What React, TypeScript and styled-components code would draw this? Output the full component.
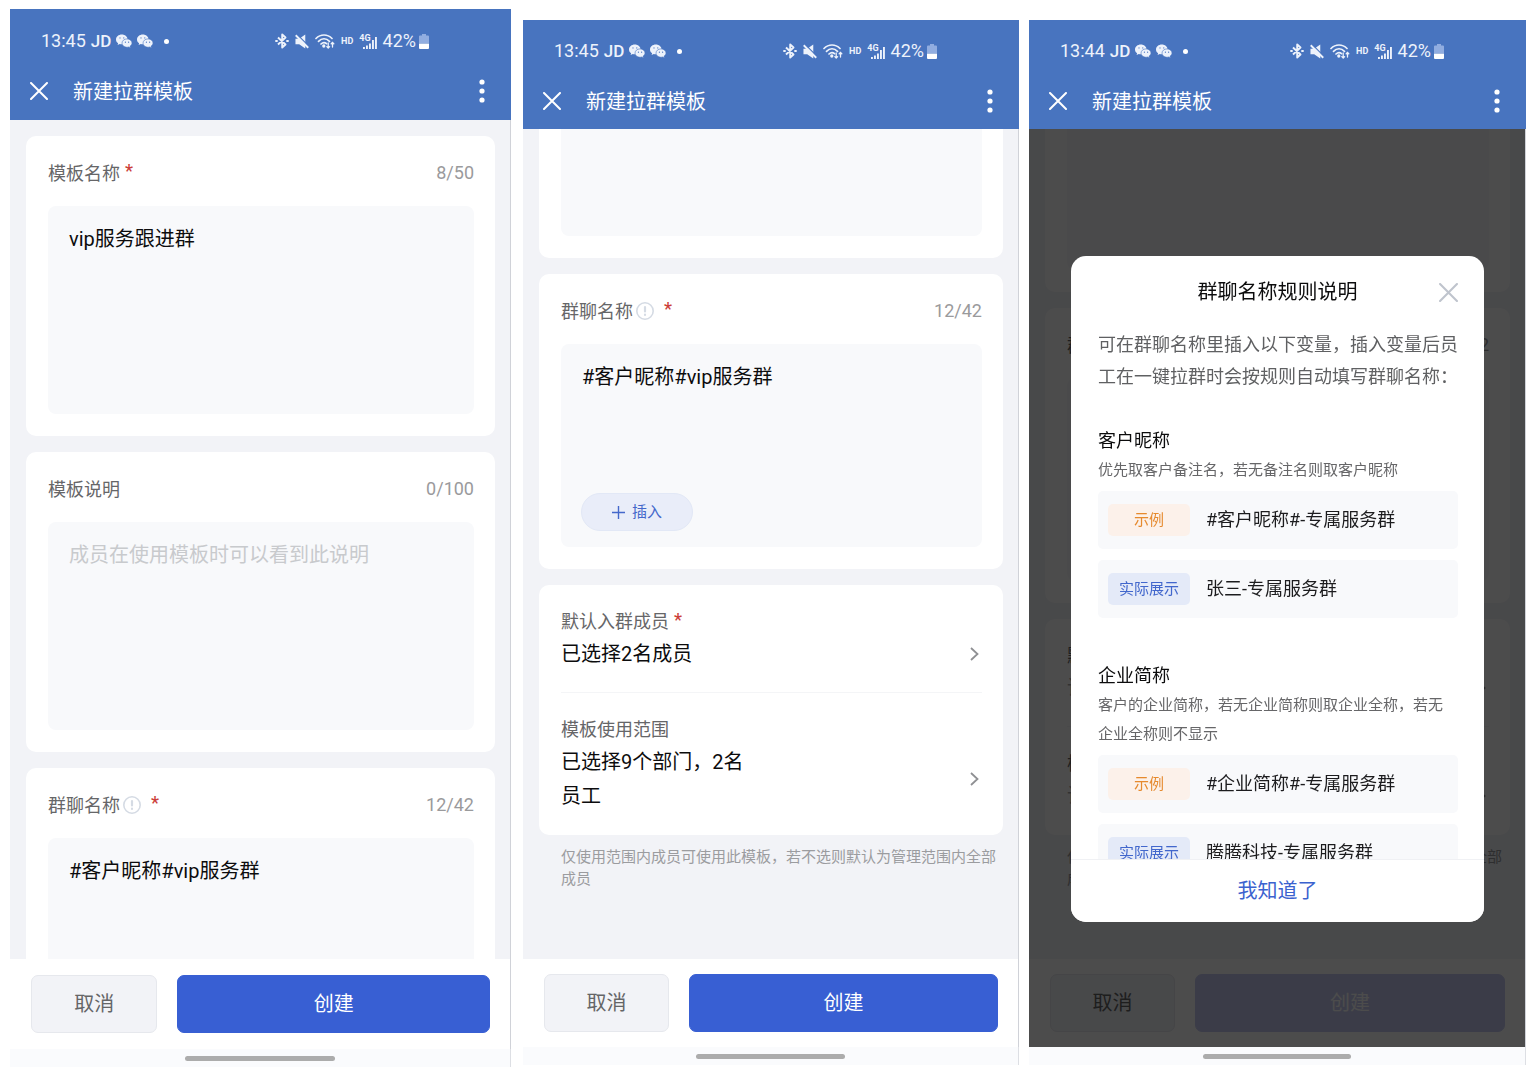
import React, { useId, useLayoutEffect, useRef } from "react";
import styled, { createGlobalStyle } from "styled-components";

const GlobalStyle = createGlobalStyle`
  * { box-sizing: border-box; }
  body {
    margin: 0;
    background: #ffffff;
    font-family: Roboto, "Noto Sans CJK SC", sans-serif;
    color: #0c0c0d;
  }
  button, textarea { font-family: inherit; }
  h1, h2, h3, p { margin: 0; font-weight: 400; }
`;

/* ---------- page ---------- */

const Gallery = styled.main`
  display: grid;
  grid-template-columns: minmax(0, 503fr) minmax(0, 496fr) minmax(0, 497fr);
  gap: 10px;
  height: 100vh;
  padding: 0 10px;
`;

const Slot = styled.div<{ $large?: boolean }>`
  display: flex;
  min-height: 0;
  padding: ${(p) => (p.$large ? "9px 2px 1px 0" : "20px 0 3px")};
`;

const Phone = styled.section`
  flex: 1;
  min-width: 0;
  display: flex;
  flex-direction: column;
`;

/* ---------- header ---------- */

const Header = styled.header<{ $large?: boolean }>`
  padding: ${(p) => (p.$large ? "20px 0 3px" : "19px 0 2px")};
  background: #4874bf;
  color: #ffffff;
`;

const StatusBar = styled.div`
  display: flex;
  align-items: center;
  justify-content: space-between;
  height: 24px;
  padding: 0 82px 0 31px;
  font-size: 18px;
  line-height: 24px;
  color: #edf2fb;
`;

const StatusGroup = styled.div<{ $gap: number }>`
  display: flex;
  align-items: center;
  gap: ${(p) => p.$gap}px;
`;

const JdMark = styled.span`
  font-size: 17px;
  font-weight: 500;
`;

const HdMark = styled.span`
  font-size: 9px;
  font-weight: 700;
`;

const Signal = styled.span`
  display: flex;
  align-items: flex-end;
  height: 15px;
`;

const SignalLabel = styled.span`
  align-self: flex-start;
  margin-right: -8px;
  font-size: 9px;
  font-weight: 700;
  line-height: 8px;
`;

const Dot = styled.span`
  width: 5px;
  height: 5px;
  margin-left: 6px;
  border-radius: 50%;
  background: #ffffff;
`;

const TitleRow = styled.div`
  display: flex;
  align-items: center;
  height: 52px;
  margin-top: 12px;
  padding: 0 17px;
`;

const IconButton = styled.button`
  display: grid;
  place-items: center;
  width: 24px;
  height: 32px;
  padding: 0;
  border: 0;
  background: none;
  color: inherit;
  cursor: pointer;
`;

const Title = styled.h1`
  flex: 1;
  padding: 2px 0 0 22px;
  font-size: 20px;
  line-height: 28px;
`;

/* ---------- content ---------- */

const Screen = styled.div`
  position: relative;
  flex: 1;
  min-height: 0;
  display: flex;
  flex-direction: column;
  border-right: 1px solid #d0d2d8;
`;

const Scroller = styled.div`
  flex: 1;
  min-height: 0;
  overflow-y: auto;
  scrollbar-width: none;
  background: #f2f3f7;
`;

const FormStack = styled.form`
  display: flex;
  flex-direction: column;
  gap: 16px;
  padding: 16px 15px 0 16px;
`;

const Card = styled.div`
  padding: 22px 21px 22px 22px;
  border-radius: 10px;
  background: #ffffff;
`;

const FieldHead = styled.div`
  display: flex;
  align-items: center;
  height: 30px;
  margin-bottom: 18px;
  font-size: 18px;
  line-height: 30px;
`;

const FieldLabel = styled.label`
  padding-top: 2px;
  color: #666668;
`;

const InfoButton = styled(IconButton)`
  width: 18px;
  height: 18px;
  margin: 0 5px 0 3px;
  color: #d5dbe4;
`;

const Star = styled.span`
  margin-left: 5px;
  padding-bottom: 4px;
  font-weight: 500;
  line-height: 26px;
  color: #cc3f3a;
`;

const Counter = styled.span`
  margin-left: auto;
  color: #9a9a9c;
`;

const FieldBox = styled.div<{ $large?: boolean }>`
  display: flex;
  flex-direction: column;
  align-items: flex-start;
  height: ${(p) => (p.$large ? 208 : 203)}px;
  border-radius: 8px;
  background: #f8f9fb;
`;

const TextArea = styled.textarea`
  flex: 1;
  width: 100%;
  padding: 19px 21px;
  border: 0;
  outline: 0;
  resize: none;
  background: none;
  font-size: 20px;
  line-height: 28px;
  color: #0c0c0d;
  &::placeholder { color: #c8cacd; opacity: 1; }
`;

const InsertButton = styled.button`
  display: flex;
  align-items: center;
  gap: 7px;
  height: 38px;
  margin: 0 20px 16px;
  padding: 0 30px;
  border: 1px solid #e2e8f6;
  border-radius: 19px;
  background: #e9edf9;
  font-size: 15px;
  line-height: 22px;
  color: #4468cb;
  cursor: pointer;
`;

const RowCard = styled(Card)`
  padding-top: 0;
  padding-bottom: 0;
`;

const PickerRow = styled.button`
  display: block;
  width: 100%;
  padding: 22px 0 21px;
  border: 0;
  border-bottom: 1px solid #f4f5f7;
  background: none;
  text-align: left;
  cursor: pointer;
  &:last-child { border-bottom-color: transparent; }
`;

const PickerLabel = styled.span`
  display: flex;
  font-size: 18px;
  line-height: 30px;
  color: #666668;
`;

const PickerBody = styled.span`
  display: flex;
  align-items: center;
  justify-content: space-between;
`;

const PickerValue = styled.span<{ $empty?: boolean }>`
  max-width: 45%;
  font-size: 20px;
  line-height: 34px;
  color: ${(p) => (p.$empty ? "#a8a9ab" : "#0c0c0d")};
`;

const Hint = styled.p`
  padding: 11px 15px 69px 38px;
  font-size: 15px;
  line-height: 22px;
  color: #9b9c9f;
`;

/* ---------- footer ---------- */

const Footer = styled.footer<{ $large?: boolean }>`
  display: flex;
  gap: 20px;
  padding: ${(p) => (p.$large ? 16 : 15)}px 20px ${(p) => (p.$large ? 16 : 15)}px 21px;
  background: #ffffff;
`;

const ActionButton = styled.button<{ $kind: "cancel" | "create" | "muted" }>`
  flex: ${(p) => (p.$kind === "cancel" ? 2 : 5)} 1 0;
  min-width: 0;
  height: 58px;
  padding: 0;
  border: 1px solid ${(p) => ({ cancel: "#e6e8ed", create: "#385fd3", muted: "#c6caf0" })[p.$kind]};
  border-radius: 7px;
  background: ${(p) => ({ cancel: "#f2f3f7", create: "#385fd3", muted: "#c6caf0" })[p.$kind]};
  font-size: 20px;
  line-height: 28px;
  color: ${(p) => (p.$kind === "cancel" ? "#646567" : "#ffffff")};
  cursor: pointer;
`;

const NavBar = styled.div`
  display: flex;
  justify-content: center;
  height: 18px;
  padding-top: 7px;
  border-right: 1px solid #dddfe4;
  background: #fafbfd;
`;

const HomePill = styled.span`
  width: 30%;
  height: 5px;
  border-radius: 3px;
  background: #acacac;
`;

/* ---------- dialog ---------- */

const Overlay = styled.div`
  position: absolute;
  inset: 0;
  display: flex;
  align-items: center;
  padding: 127px 41px 125px 42px;
  background: rgba(0, 0, 0, 0.7);
`;

const Dialog = styled.div`
  display: flex;
  flex-direction: column;
  width: 100%;
  max-height: 100%;
  border-radius: 15px;
  background: #ffffff;
  overflow: hidden;
`;

const DialogHead = styled.div`
  display: grid;
  grid-template-columns: 24px 1fr 24px;
  align-items: center;
  flex: none;
  height: 72px;
  padding: 0 24px;
  color: #bfc4cd;
`;

const DialogTitle = styled.h2`
  grid-column: 2;
  text-align: center;
  font-size: 20px;
  line-height: 28px;
  color: #0c0c0d;
`;

const DialogBody = styled.div`
  flex: 1;
  min-height: 0;
  overflow-y: auto;
  scrollbar-width: none;
  padding: 1px 26px 0 27px;
`;

const Intro = styled.p`
  margin-bottom: 33px;
  font-size: 18px;
  line-height: 32px;
  color: #5f6062;
`;

const Rule = styled.section`
  margin-bottom: 43px;
`;

const RuleTitle = styled.h3`
  font-size: 18px;
  line-height: 30px;
`;

const RuleText = styled.p`
  margin-bottom: 6px;
  padding-right: 10px;
  font-size: 15px;
  line-height: 29px;
  color: #666668;
`;

const Sample = styled.div`
  display: flex;
  align-items: center;
  gap: 16px;
  height: 58px;
  margin-bottom: 11px;
  padding: 0 10px;
  border-radius: 5px;
  background: #f8f9fb;
  font-size: 18px;
  line-height: 28px;
  color: #1c1c1e;
`;

const Tag = styled.span<{ $tone: "orange" | "blue" }>`
  flex: none;
  min-width: 82px;
  padding: 0 11px;
  border-radius: 5px;
  text-align: center;
  font-size: 15px;
  line-height: 32px;
  background: ${(p) => (p.$tone === "orange" ? "#fcf1ea" : "#e4eaf8")};
  color: ${(p) => (p.$tone === "orange" ? "#e68a2e" : "#4267cc")};
`;

const ConfirmButton = styled.button`
  flex: none;
  height: 63px;
  border: 0;
  border-top: 1px solid #f0f1f4;
  background: #ffffff;
  font-size: 20px;
  line-height: 28px;
  color: #3b62cf;
  cursor: pointer;
`;

/* ---------- icons ---------- */

const Cross = ({ size, weight }: { size: number; weight: number }) => (
  <svg width={size} height={size} viewBox="0 0 18 18" fill="none" stroke="currentColor" strokeWidth={weight} strokeLinecap="round">
    <path d="M1 1l16 16M17 1L1 17" />
  </svg>
);

const MoreDots = () => (
  <svg width="6" height="24" viewBox="0 0 6 24" fill="currentColor">
    <circle cx="3" cy="3" r="2.6" />
    <circle cx="3" cy="12" r="2.6" />
    <circle cx="3" cy="21" r="2.6" />
  </svg>
);

const WeChat = () => (
  <svg width="16" height="14" viewBox="0 0 16 14">
    <path fill="currentColor" d="M5.800 0.500C2.600 0.500 0 2.700 0 5.500c0 1.600.8 2.900 2.100 3.800L1.600 11l2.200-1c.6.2 1.300.3 2 .3 3.200 0 5.800-2.200 5.800-4.900S9 .5 5.800.5z" />
    <path fill="currentColor" stroke="#4874bf" strokeWidth=".6" d="M11 4.900c-2.800 0-5 1.900-5 4.200s2.200 4.200 5 4.200c.6 0 1.200-.1 1.700-.3l1.800.9-.5-1.600c1.200-.7 2-1.900 2-3.200 0-2.300-2.200-4.200-5-4.200z" />
    <circle cx="4" cy="3.900" r=".6" fill="#4874bf" />
    <circle cx="7.800" cy="3.900" r=".6" fill="#4874bf" />
    <circle cx="9.400" cy="8.200" r=".6" fill="#4874bf" />
    <circle cx="12.600" cy="8.200" r=".6" fill="#4874bf" />
  </svg>
);

const Bluetooth = () => (
  <svg width="14" height="16" viewBox="0 0 14 16" fill="none" stroke="currentColor" strokeWidth="1.900" strokeLinejoin="round">
    <path d="M3 4.500l7.500 7L7.200 14.500V1.500l3.300 3L3 11.500" />
    <path d="M0.300 8h2.400M11.300 8h2.400" strokeWidth="2.200" />
  </svg>
);

const Muted = () => (
  <svg width="14" height="15" viewBox="0 0 15 15" fill="none" stroke="currentColor">
    <path fill="currentColor" stroke="none" d="M0.500 4.500v6h4l6.500 4.500V0L4.500 4.500z" />
    <path d="M2.200 0l13 13" stroke="#4874bf" strokeWidth="1.300" />
    <path d="M.8 .8l13.400 13.400" strokeWidth="2" />
  </svg>
);

const Wifi = () => (
  <svg width="20" height="16" viewBox="0 0 20 16" fill="none" stroke="currentColor" strokeWidth="1.700" strokeLinecap="round">
    <path d="M1 5.500c4.600-4.700 11.400-4.700 16 0" />
    <path d="M3.500 8.300c3.300-3.200 7.700-3.200 11 0" />
    <path d="M6 11c1.800-1.700 4-1.700 5.500-.3" />
    <circle cx="8.800" cy="13" r=".8" fill="currentColor" />
    <path d="M13.200 10v5M11.800 13.600l1.400 1.400 1.400-1.400M17.500 14V9.500M16.200 10.800l1.300-1.300 1.300 1.300" strokeWidth="1.300" />
  </svg>
);

const Bars = () => (
  <svg width="14" height="13" viewBox="0 0 14 13" fill="currentColor">
    <path d="M0 11h1.900v2H0zM3 9.500h1.900V13H3zM6 7.500h1.900V13H6zM9 4h1.900v9H9zM12 1h1.900v12H12z" />
  </svg>
);

const Battery = () => (
  <svg width="10" height="15" viewBox="0 0 10 15">
    <path fill="#91ade0" d="M3 0h4v1.500h2a1 1 0 011 1V9H0V2.500a1 1 0 011-1h2z" />
    <path fill="#ffffff" d="M0 9.500h10V14a1 1 0 01-1 1H1a1 1 0 01-1-1z" />
  </svg>
);

const Info = () => (
  <svg width="18" height="18" viewBox="0 0 18 18" fill="none" stroke="currentColor" strokeLinecap="round">
    <circle cx="9" cy="9" r="8.200" strokeWidth="1.600" />
    <path d="M9 5.200v4.300M9 12.700v.2" strokeWidth="2.200" />
  </svg>
);

const Plus = () => (
  <svg width="13" height="13" viewBox="0 0 13 13" stroke="currentColor" strokeWidth="1.400">
    <path d="M6.500 0v13M0 6.500h13" />
  </svg>
);

const Chevron = () => (
  <svg width="16" height="14" viewBox="0 0 16 14" fill="none" stroke="#8f9093" strokeWidth="1.800">
    <path d="M5 1l6.500 6L5 13" />
  </svg>
);

/* ---------- parts ---------- */

interface AppBarProps {
  time: string;
  large?: boolean;
}

function AppBar({ time, large }: AppBarProps) {
  return (
    <Header $large={large}>
      <StatusBar>
        <StatusGroup $gap={5}>
          <span>{time}</span>
          <JdMark>JD</JdMark>
          <WeChat />
          <WeChat />
          <Dot />
        </StatusGroup>
        <StatusGroup $gap={6}>
          <Bluetooth />
          <Muted />
          <Wifi />
          <HdMark>HD</HdMark>
          <Signal>
            <SignalLabel>4G</SignalLabel>
            <Bars />
          </Signal>
          <StatusGroup $gap={3}>
            <span>42%</span>
            <Battery />
          </StatusGroup>
        </StatusGroup>
      </StatusBar>
      <TitleRow>
        <IconButton aria-label="关闭"><Cross size={18} weight={2} /></IconButton>
        <Title>新建拉群模板</Title>
        <IconButton aria-label="更多"><MoreDots /></IconButton>
      </TitleRow>
    </Header>
  );
}

interface FieldProps {
  label: string;
  count: string;
  value?: string;
  placeholder?: string;
  required?: boolean;
  info?: boolean;
  insert?: boolean;
  large?: boolean;
}

function Field({ label, count, value, placeholder, required, info, insert, large }: FieldProps) {
  const id = useId();
  return (
    <Card>
      <FieldHead>
        <FieldLabel htmlFor={id}>{label}</FieldLabel>
        {info && <InfoButton type="button" aria-label="规则说明"><Info /></InfoButton>}
        {required && <Star>*</Star>}
        <Counter>{count}</Counter>
      </FieldHead>
      <FieldBox $large={large}>
        <TextArea id={id} defaultValue={value} placeholder={placeholder} spellCheck={false} />
        {insert && <InsertButton type="button"><Plus />插入</InsertButton>}
      </FieldBox>
    </Card>
  );
}

interface PickerProps {
  label: string;
  value: string;
  required?: boolean;
  empty?: boolean;
}

function Picker({ label, value, required, empty }: PickerProps) {
  return (
    <PickerRow type="button">
      <PickerLabel>{label}{required && <Star>*</Star>}</PickerLabel>
      <PickerBody>
        <PickerValue $empty={empty}>{value}</PickerValue>
        <Chevron />
      </PickerBody>
    </PickerRow>
  );
}

function Actions({ large, muted }: { large?: boolean; muted?: boolean }) {
  return (
    <Footer $large={large}>
      <ActionButton type="button" $kind="cancel">取消</ActionButton>
      <ActionButton type="button" $kind={muted ? "muted" : "create"}>创建</ActionButton>
    </Footer>
  );
}

function HomeIndicator() {
  return <NavBar><HomePill /></NavBar>;
}

interface LowerFormProps {
  chatName?: string;
  count: string;
  members: string;
  scope: string;
  empty?: boolean;
}

/* The form scrolled down to its last card. */
function LowerForm({ chatName, count, members, scope, empty }: LowerFormProps) {
  const scroller = useRef<HTMLDivElement>(null);
  useLayoutEffect(() => {
    const el = scroller.current;
    if (el) el.scrollTop = el.scrollHeight;
  }, []);
  return (
    <Scroller ref={scroller}>
      <FormStack>
        <Field label="模板说明" count="0/100" />
        <Field label="群聊名称" count={count} value={chatName} required info insert />
        <RowCard>
          <Picker label="默认入群成员" value={members} required empty={empty} />
          <Picker label="模板使用范围" value={scope} empty={empty} />
        </RowCard>
      </FormStack>
      <Hint>仅使用范围内成员可使用此模板，若不选则默认为管理范围内全部成员</Hint>
    </Scroller>
  );
}

const rules = [
  {
    name: "客户昵称",
    text: "优先取客户备注名，若无备注名则取客户昵称",
    sample: "#客户昵称#-专属服务群",
    shown: "张三-专属服务群",
  },
  {
    name: "企业简称",
    text: "客户的企业简称，若无企业简称则取企业全称，若无企业全称则不显示",
    sample: "#企业简称#-专属服务群",
    shown: "腾腾科技-专属服务群",
  },
];

function RulesDialog() {
  const titleId = useId();
  return (
    <Overlay>
      <Dialog role="dialog" aria-modal="true" aria-labelledby={titleId}>
        <DialogHead>
          <DialogTitle id={titleId}>群聊名称规则说明</DialogTitle>
          <IconButton aria-label="关闭"><Cross size={19} weight={2} /></IconButton>
        </DialogHead>
        <DialogBody>
          <Intro>可在群聊名称里插入以下变量，插入变量后员工在一键拉群时会按规则自动填写群聊名称：</Intro>
          {rules.map((rule) => (
            <Rule key={rule.name}>
              <RuleTitle>{rule.name}</RuleTitle>
              <RuleText>{rule.text}</RuleText>
              <Sample><Tag $tone="orange">示例</Tag>{rule.sample}</Sample>
              <Sample><Tag $tone="blue">实际展示</Tag>{rule.shown}</Sample>
            </Rule>
          ))}
        </DialogBody>
        <ConfirmButton type="button">我知道了</ConfirmButton>
      </Dialog>
    </Overlay>
  );
}

export default function App() {
  return (
    <>
      <GlobalStyle />
      <Gallery>
        <Slot $large>
          <Phone>
            <AppBar time="13:45" large />
            <Screen>
              <Scroller>
                <FormStack>
                  <Field label="模板名称" count="8/50" value="vip服务跟进群" required large />
                  <Field label="模板说明" count="0/100" placeholder="成员在使用模板时可以看到此说明" large />
                  <Field label="群聊名称" count="12/42" value="#客户昵称#vip服务群" required info insert large />
                </FormStack>
              </Scroller>
              <Actions large />
            </Screen>
            <HomeIndicator />
          </Phone>
        </Slot>
        <Slot>
          <Phone>
            <AppBar time="13:45" />
            <Screen>
              <LowerForm
                chatName="#客户昵称#vip服务群"
                count="12/42"
                members="已选择2名成员"
                scope="已选择9个部门，2名员工"
              />
              <Actions />
            </Screen>
            <HomeIndicator />
          </Phone>
        </Slot>
        <Slot>
          <Phone>
            <AppBar time="13:44" />
            <Screen>
              <LowerForm count="0/42" members="请选择" scope="请选择" empty />
              <Actions muted />
              <RulesDialog />
            </Screen>
            <HomeIndicator />
          </Phone>
        </Slot>
      </Gallery>
    </>
  );
}
